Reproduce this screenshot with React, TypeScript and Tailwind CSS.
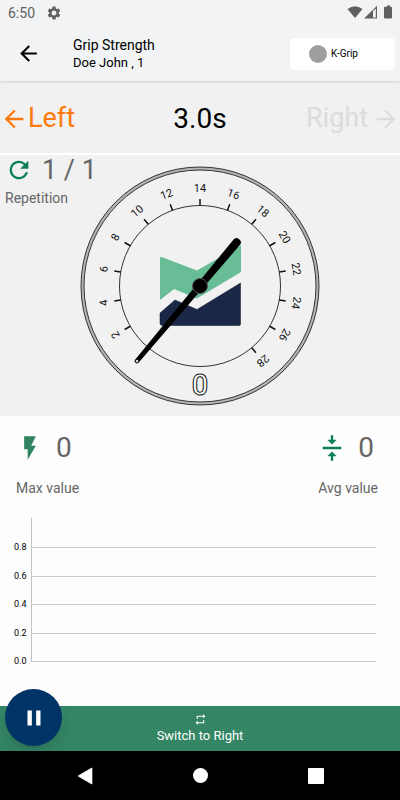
import React from 'react';
import {
  MdArrowBack,
  MdArrowForward,
  MdFlashOn,
  MdPause,
  MdRefresh,
  MdRepeat,
  MdSettings,
  MdVerticalAlignCenter,
} from 'react-icons/md';

const marks = [2, 4, 6, 8, 10, 12, 14, 16, 18, 20, 22, 24, 26, 28];
const axis = ['0.8', '0.6', '0.4', '0.2', '0.0'];

const StatusBar = () => (
  <div className="flex h-[26px] items-center px-2 text-[#5f6060]">
    <span className="text-sm">6:50</span>
    <MdSettings className="ml-[11px] size-4" />
    <svg viewBox="0 0 46 14" className="mb-[2px] ml-auto h-[14px] w-[46px]" fill="currentColor">
      <path d="M1.500 4Q9-1.500 16.500 4L9 13z" />
      <path d="M18 13.500L31 .8V13.500zM27 6V12.500H29.800V3.600z" fillRule="evenodd" />
      <path d="M39 1.700h2V.5h3v1.200h1q1 0 1 1V12.500q0 1-1 1h-6q-1 0-1-1V2.700q0-1 1-1z" />
    </svg>
  </div>
);

const Header = () => (
  <header className="relative z-10 bg-[#f2f3f5] shadow-sm">
    <StatusBar />
    <div className="flex h-[55px] items-center pr-[5px] pl-4">
      <button aria-label="Back" className="text-black">
        <MdArrowBack className="size-[25px]" />
      </button>
      <div className="ml-8 text-black">
        <h1 className="text-sm leading-[18px]">Grip Strength</h1>
        <p className="text-[13px] leading-[18px]">Doe John , 1</p>
      </div>
      <button className="ml-auto flex h-8 w-[105px] items-center gap-1 rounded bg-white pl-[19px] text-[10px] text-black">
        <span className="size-[18px] rounded-full bg-[#9e9e9e]" />
        K-Grip
      </button>
    </div>
  </header>
);

const Gauge = () => (
  <svg viewBox="0 0 240 240" className="size-[240px]" role="img" aria-label="Force gauge">
    <circle cx="120" cy="120" r="117.500" fill="none" stroke="#b5b5b5" strokeWidth="3" />
    <circle cx="120" cy="120" r="119" fill="none" stroke="#333" strokeWidth="1" />
    <circle cx="120" cy="120" r="116" fill="none" stroke="#333" strokeWidth="1" />
    <circle cx="120" cy="120" r="80.500" fill="none" stroke="#333" strokeWidth="1" />

    {/* Logo */}
    <path d="M80 92q0-1.500 1.500-1L117 104.500 161 79v27L117 132.500 94 123 80 134z" fill="#68bd96" />
    <path d="M80 147l15-13 22 9.500L160.500 117v41q0 1.500-1.500 1.500H81.500L80 158z" fill="#1b2747" stroke="#0c1020" strokeWidth=".5" />

    {marks.map((mark) => (
      <g key={mark} transform={`rotate(${(mark - 14) * 10} 120 120)`}>
        <line x1="120" y1="39.500" x2="120" y2="33" stroke="#111" strokeWidth="1.500" />
        <text x="120" y="26" textAnchor="middle" fontSize="11" fill="#111">
          {mark}
        </text>
      </g>
    ))}

    <text x="120" y="229" textAnchor="middle" fontSize="29" fontWeight="500" fill="#fff" stroke="#111" strokeWidth="1">
      0
    </text>

    {/* Needle */}
    <g transform="rotate(-140 120 120)">
      <path d="M117.700 22q0-2.300 2.300-2.300t2.300 2.300L124.200 177q0 4-4.200 4t-4.200-4z" fill="#000" />
      <circle cx="120" cy="22" r="1.300" fill="#ddd" />
    </g>
    <circle cx="120" cy="120" r="7.500" fill="#000" stroke="#555" strokeWidth="1" />
  </svg>
);

const Chart = () => (
  <div className="mt-[21px] flex pr-6 pl-[14px]">
    <div className="mt-[23px] flex h-[126px] w-[17px] flex-col justify-between text-[9px] leading-3 text-black">
      {axis.map((label) => (
        <span key={label}>{label}</span>
      ))}
    </div>
    <div className="flex h-36 flex-1 flex-col justify-between border-l border-[#c4c4c4] pt-[29px]">
      {axis.map((label) => (
        <div key={label} className="h-px bg-[#cbcbcb]" />
      ))}
    </div>
  </div>
);

const App = () => {
  return (
    <div className="flex min-h-screen flex-col bg-[#fdfdfd] font-['Roboto',sans-serif]">
      <Header />

      {/* Side and timer */}
      <div className="flex h-[74px] items-center justify-between border-b-2 border-white bg-[#f1f1f1] pt-[3px]">
        <div className="flex flex-1 items-center text-[27px] text-[#ff7a0c]">
          <MdArrowBack className="size-7" />
          Left
        </div>
        <div className="text-[28px] text-black">3.0s</div>
        <div className="flex flex-1 items-center justify-end gap-1 text-[27px] text-[#dcdcdc]">
          Right
          <MdArrowForward className="size-7" />
        </div>
      </div>

      {/* Gauge with the repetition counter over its corner */}
      <div className="grid h-[261px] bg-[#f1f1f1] text-[#666]">
        <div className="col-start-1 row-start-1 px-[5px]">
          <div className="flex items-center gap-[9px] text-[27px] leading-[30px]">
            <MdRefresh className="size-7 text-[#0b7f55]" />
            1 / 1
          </div>
          <p className="mt-1 text-sm leading-[18px]">Repetition</p>
        </div>
        <div className="col-start-1 row-start-1 mt-[11px] justify-self-center">
          <Gauge />
        </div>
      </div>

      {/* Values */}
      <div className="flex justify-between pt-[17px] pr-[22px] pl-4 text-[#666]">
        <div>
          <div className="flex items-center gap-3 text-[28px] leading-[30px]">
            <MdFlashOn className="size-7 text-[#2f8562]" />
            0
          </div>
          <p className="mt-4 text-sm leading-[18px]">Max value</p>
        </div>
        <div>
          <div className="flex items-center gap-3 text-[28px] leading-[30px]">
            <MdVerticalAlignCenter className="size-7 text-[#0b7f55]" />
            0
          </div>
          <p className="mt-4 text-sm leading-[18px]">Avg value</p>
        </div>
      </div>

      <Chart />

      <div className="relative mt-auto">
        <button className="flex h-[45px] w-full flex-col items-center justify-center gap-px bg-[#338564] text-[13px] leading-[18px] text-white">
          <MdRepeat className="size-[13px]" />
          Switch to Right
        </button>
        <button
          aria-label="Pause"
          className="absolute bottom-[5px] left-[5px] flex size-[57px] items-center justify-center rounded-full bg-[#003366] text-white shadow-lg"
        >
          <MdPause className="size-[26px]" />
        </button>
      </div>

      {/* Android navigation */}
      <nav className="flex h-[49px] items-center justify-center gap-[100px] bg-black">
        <button aria-label="Back">
          <svg viewBox="0 0 16 18" className="h-[18px] w-4" fill="#fff">
            <path d="M.5 9L14.500.8q.8-.3.8.6v15.200q0 .9-.8.6z" />
          </svg>
        </button>
        <button aria-label="Home" className="size-[15px] rounded-full bg-white" />
        <button aria-label="Recent apps" className="size-4 rounded-[1px] bg-white" />
      </nav>
    </div>
  );
};

export default App;
